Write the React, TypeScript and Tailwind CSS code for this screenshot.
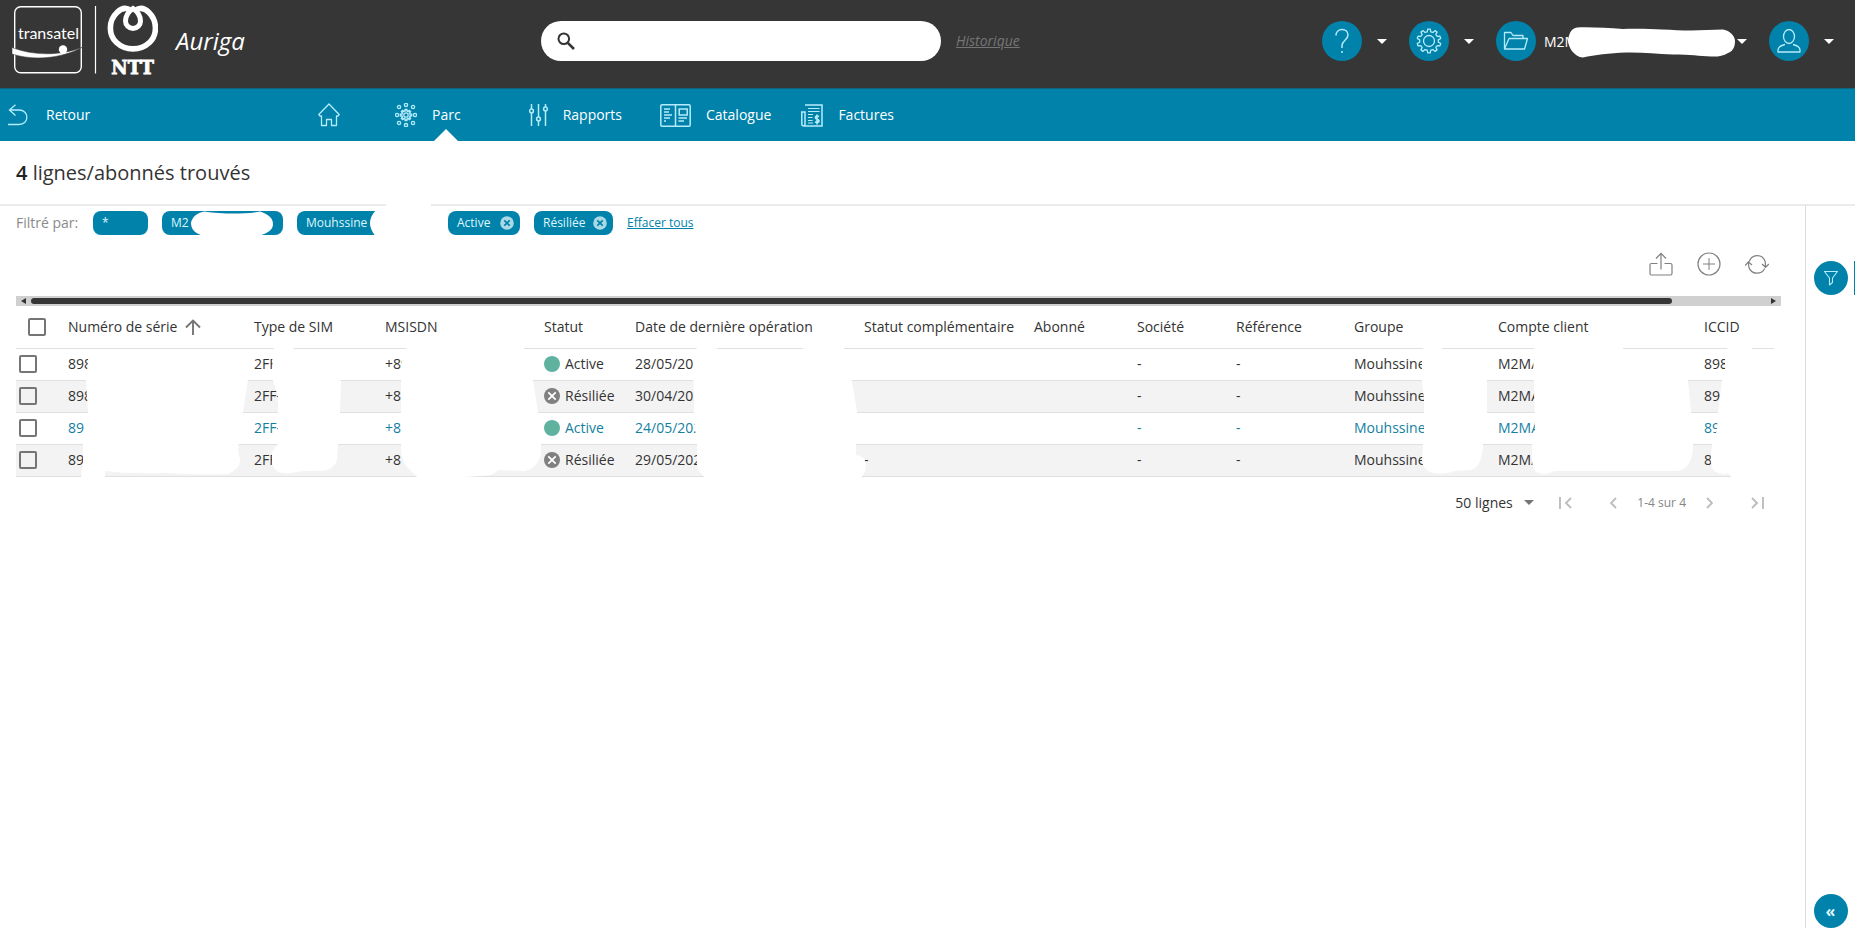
import React from "react";

const rows = [
  { serial: "898", sim: "2FF-", msisdn: "+89", active: true, date: "28/05/202", extra: "", group: "Mouhssine", account: "M2MA", iccid: "898", link: false },
  { serial: "898", sim: "2FF-", msisdn: "+8", active: false, date: "30/04/202", extra: "", group: "Mouhssine", account: "M2MA", iccid: "89", link: false },
  { serial: "89", sim: "2FF-", msisdn: "+8", active: true, date: "24/05/202", extra: "", group: "Mouhssine", account: "M2MA", iccid: "898", link: true },
  { serial: "89", sim: "2FF-", msisdn: "+8", active: false, date: "29/05/202", extra: "-", group: "Mouhssine", account: "M2MA", iccid: "89", link: false },
];

function gearPath(c: number, outer: number, inner: number, teeth: number) {
  const step = (Math.PI * 2) / teeth;
  const pts: string[] = [];
  for (let i = 0; i < teeth; i++) {
    const a = i * step - Math.PI / 2;
    const at = (r: number, t: number) => `${(c + r * Math.cos(t)).toFixed(2)} ${(c + r * Math.sin(t)).toFixed(2)}`;
    pts.push(at(inner, a - step * 0.3), at(outer, a - step * 0.17), at(outer, a + step * 0.17), at(inner, a + step * 0.3));
  }
  return `M${pts.join("L")}Z`;
}

function Caret({ className }: { className: string }) {
  return (
    <svg width="10" height="5" viewBox="0 0 10 5" className={className} aria-hidden="true">
      <path d="M0 0h10L5 5z" fill="currentColor" />
    </svg>
  );
}

function RoundButton({ label, children }: { label: string; children: React.ReactNode }) {
  return (
    <button aria-label={label} className="flex size-10 shrink-0 items-center justify-center rounded-full bg-[#0082aa] text-[#b5ecfb]">
      {children}
    </button>
  );
}

function Logo() {
  return (
    <svg width="148" height="76" viewBox="10 4 148 76" aria-label="Transatel NTT" className="shrink-0">
      <rect x="14.7" y="7.7" width="66.6" height="66" rx="6" fill="none" stroke="#fff" strokeWidth="1.4" />
      <path d="M12 48.500v6.500C33 61.500 60 60.500 84 47.500C62 57 34 57 12 48.500Z" fill="#fff" stroke="#363636" strokeWidth=".5" />
      <circle cx="63" cy="50.500" r="4.200" fill="#fff" />
      <text x="48.500" y="39.500" textAnchor="middle" fontFamily="Lato, 'Liberation Sans', sans-serif" fontSize="16" fill="#fff">transatel</text>
      <path d="M95.500 7v67.500" stroke="#fff" strokeWidth="1.200" />
      <g fill="none" stroke="#fff" strokeWidth="5.600">
        <path d="M133 9.500C128 13 125.500 17.500 125.500 22A7.500 7.500 0 0 0 140.500 22C140.500 17.500 138 13 133 9.500Z" strokeWidth="5" />
        <path d="M131 11.500C126 8 121 9.500 117 13.500C108 22 108.500 36 116.500 43.500C125.500 52 140.500 52 149.500 43.500C157.500 36 157.500 22 149 13.500C145 9.500 140 8 135 11.500" />
      </g>
      <text x="132.500" y="74.500" textAnchor="middle" fontFamily="'DejaVu Serif', serif" fontWeight="bold" fontSize="18" fill="#fff" stroke="#fff" strokeWidth=".8">NTT</text>
    </svg>
  );
}

function Header() {
  return (
    <header className="flex h-[88px] items-center bg-[#363636] pb-[6px] text-white">
      <div className="flex w-[541px] shrink-0 items-center gap-[18px] pl-[10px]">
        <Logo />
        <span className="text-2xl italic">Auriga</span>
      </div>
      <div className="flex items-center gap-[15px]">
        <label className="flex h-10 w-[400px] items-center gap-2 rounded-full bg-white pl-4 text-[#333]">
          <svg width="18" height="18" viewBox="0 0 18 18" fill="none" stroke="currentColor" aria-label="Rechercher">
            <circle cx="6.800" cy="6.800" r="5.300" strokeWidth="2" />
            <path d="M10.800 10.800L17 17" strokeWidth="2.600" />
          </svg>
          <input type="search" aria-label="Rechercher" className="min-w-0 flex-1 bg-transparent pr-4 text-sm outline-none" />
        </label>
        <a href="#historique" className="text-sm italic text-[#757575] underline">Historique</a>
      </div>
      <div className="ml-auto flex items-center gap-[22px] pr-[21px]">
        <div className="flex items-center gap-[15px]">
          <RoundButton label="Aide">
            <svg width="16" height="26" viewBox="0 0 16 26" fill="none" stroke="currentColor" strokeWidth="1.500">
              <path d="M2 7.500C2 -.5 14 -.5 14 7C14 12 8 12.500 8 17.500V20" />
              <path d="M8 23v2" />
            </svg>
          </RoundButton>
          <Caret className="" />
        </div>
        <div className="flex items-center gap-[15px]">
          <RoundButton label="Paramètres">
            <svg width="26" height="26" viewBox="0 0 26 26" fill="none" stroke="currentColor" strokeWidth="1.300">
              <path d={gearPath(13, 12, 9.4, 10)} strokeLinejoin="round" />
              <circle cx="13" cy="13" r="5.500" />
            </svg>
          </RoundButton>
          <Caret className="" />
        </div>
        <div className="flex items-center">
          <RoundButton label="Compte">
            <svg width="26" height="20" viewBox="0 0 26 20" fill="none" stroke="currentColor" strokeWidth="1.300" strokeLinejoin="round">
              <path d="M1.500 18V1.500H8L10 4.500H20V7.500M1.500 18L6 7.500H24.500L21.500 18Z" />
            </svg>
          </RoundButton>
          <div className="relative ml-2 w-[193px]">
            <span className="text-sm">M2M</span>
            <svg width="172" height="34" viewBox="1564 26 172 34" className="absolute left-[21px] top-[-4px]" aria-hidden="true">
              <path d="M1576 28.500C1590 28 1606 29 1622 30C1636 29.500 1650 30 1661 30.500C1672 31 1680 31.500 1690 31.500L1722 30.500C1730 32 1734 38 1734 42C1734 48 1732 52 1727 54C1722 57 1716 58 1710 57.500C1698 57 1690 55.500 1672 55.500C1655 55 1640 53 1625 53.500C1608 54 1594 56 1582 58.500C1573 58 1567 48 1567 41C1568 34 1571 29 1576 28.500Z" fill="#fff" />
            </svg>
          </div>
          <Caret className="" />
        </div>
        <div className="flex items-center gap-[15px]">
          <RoundButton label="Utilisateur">
            <svg width="24" height="24" viewBox="0 0 24 24" fill="none" stroke="currentColor" strokeWidth="1.300" strokeLinejoin="round">
              <ellipse cx="12" cy="7.500" rx="5.500" ry="7" />
              <path d="M8 15.500C4 16.500 1 18 1 21V23H23V21C23 18 20 16.500 16 15.500" />
            </svg>
          </RoundButton>
          <Caret className="" />
        </div>
      </div>
    </header>
  );
}

function ParcIcon() {
  const ring = [[11, 1.9], [18, 4], [20, 12], [18, 20], [11, 22.1], [4, 20], [2, 12], [4, 4]];
  return (
    <svg width="22" height="24" viewBox="0 0 22 24" fill="none" stroke="currentColor">
      {ring.map(([x, y], i) => (
        <circle key={i} cx={x} cy={y} r="1.600" strokeWidth="1.300" />
      ))}
      <path d={gearPath(12, 5.6, 4.2, 8)} transform="translate(-1 0)" strokeWidth="1.600" />
      <circle cx="11" cy="12" r="2.200" strokeWidth="1.300" />
    </svg>
  );
}

function Nav() {
  const link = "flex items-center gap-[15px]";
  return (
    <nav className="flex h-[53px] items-center border-t border-[#0f6580] bg-[#0082aa] text-sm text-white">
      <a href="#retour" className="flex w-[318px] shrink-0 items-center gap-[18px] pl-2">
        <svg width="20" height="22" viewBox="0 0 20 22" fill="none" stroke="#b5ecfb" strokeWidth="1.300">
          <path d="M0 20.500H11C21.500 20.500 21.500 6 11 6H2M7.500 .7L1.500 6L7.500 11.500" />
        </svg>
        Retour
      </a>
      <a href="#accueil" aria-label="Accueil" className="mr-[55px]">
        <svg width="22" height="24" viewBox="0 0 22 24" fill="none" stroke="#b5ecfb" strokeWidth="1.300" strokeLinejoin="round">
          <path d="M.8 11.500L11 1L21.200 11.500L20 13H18.500V22.500H13.500V16.500H8.500V22.500H3.500V13H2Z" />
        </svg>
      </a>
      <a href="#parc" className={`${link} relative mr-[68px] h-full text-white`}>
        <span className="text-[#b5ecfb]"><ParcIcon /></span>
        Parc
        <svg width="24" height="12" viewBox="0 0 24 12" className="absolute bottom-0 right-[3px]" aria-hidden="true">
          <path d="M0 12L12 0L24 12Z" fill="#fff" />
        </svg>
      </a>
      <a href="#rapports" className={`${link} mr-[38px]`}>
        <svg width="19" height="24" viewBox="0 0 19 24" fill="none" stroke="#b5ecfb" strokeWidth="1.500">
          <path d="M2.500 1V6M2.500 10V23M9.500 1V14M9.500 18V23M16.500 1V4M16.500 8V23" />
          <circle cx="2.500" cy="8" r="1.900" />
          <circle cx="9.500" cy="16" r="1.900" />
          <circle cx="16.500" cy="6" r="1.900" />
        </svg>
        Rapports
      </a>
      <a href="#catalogue" className={`${link} mr-[30px]`}>
        <svg width="31" height="23" viewBox="0 0 31 23" fill="none" stroke="#b5ecfb" strokeWidth="1.500">
          <rect x=".8" y=".8" width="29.400" height="21.400" rx="1.200" />
          <path d="M15.500 1V22M4 5H10M4 8H9M4 11H12M4 14H10M4 17H6M18.500 14H27M18.500 17H24" />
          <rect x="19.200" y="5" width="8" height="6" />
        </svg>
        Catalogue
      </a>
      <a href="#factures" className={link}>
        <svg width="22" height="23" viewBox="0 0 22 23" fill="none" stroke="#b5ecfb" strokeWidth="1.500">
          <path d="M4 1H21V22H3C1.500 22 .8 21 .8 20V8H4V20C4 21 3.500 22 2.500 22" />
          <path d="M7 4.500H18.500M7 7.500H18.500M7 10.500H12M7 13.500H11.500M7 16.500H11.500M7 19H12" strokeWidth="1.200" />
          <path d="M18 12.500C15 11.200 13.500 13.500 15 14.500L17.500 16C19 17.500 17 19.200 14 18M16 10.500V20.500" strokeWidth="1.600" />
        </svg>
        Factures
      </a>
    </nav>
  );
}

function ChipClose({ label }: { label: string }) {
  return (
    <button aria-label={`Retirer ${label}`} className="ml-auto">
      <svg width="14" height="14" viewBox="0 0 14 14">
        <circle cx="7" cy="7" r="6.800" fill="#a9d8e6" />
        <path d="M4.300 4.300L9.700 9.700M9.700 4.300L4.300 9.700" stroke="#0082aa" strokeWidth="1.700" />
      </svg>
    </button>
  );
}

function Filters() {
  const chip = "flex h-6 shrink-0 items-center rounded-lg bg-[#0082aa] pl-[9px] pr-[6px] text-xs text-[#dff6fd]";
  return (
    <div className="relative flex items-center gap-[14px] pt-[5px]">
      <span className="w-[63px] text-sm text-[#8a8a8a]">Filtré par:</span>
      <span className={`${chip} w-[55px]`}>*</span>
      <span className={`${chip} w-[121px]`}>M2</span>
      <span className={`${chip} w-[137px]`}>Mouhssine</span>
      <span className={`${chip} w-[72px]`}>Active<ChipClose label="Active" /></span>
      <span className={`${chip} w-[79px]`}>Résiliée<ChipClose label="Résiliée" /></span>
      <a href="#effacer" className="text-xs text-[#0082aa] underline">Effacer tous</a>
      <svg width="420" height="38" viewBox="16 200 420 38" className="absolute left-0 top-[-5px]" aria-hidden="true">
        <path d="M204 210.500C214 212 224 212.500 233 212.500C243 212.500 252 212 260 210.500C268 213 273 217 273 223C273 229 268 232 260 234.500L205 235.500C196 233 191 229 191 222C192 216 197 212 204 210.500Z" fill="#fff" />
        <path d="M386 200H431V207H436V238H378C373 233 370 227 370 222C370 218 372 213 376 209L386 207Z" fill="#fff" />
      </svg>
    </div>
  );
}

function Toolbar() {
  return (
    <div className="flex items-center justify-end gap-[24px] pr-[12px] text-[#808080]">
      <button aria-label="Exporter">
        <svg width="24" height="24" viewBox="0 0 24 24" fill="none" stroke="currentColor" strokeWidth="1.200">
          <path d="M8.500 11.500H2.500Q1 11.500 1 13V21.500Q1 23 2.500 23H21.500Q23 23 23 21.500V13Q23 11.500 21.500 11.500H15.500M12 17.500V1.500M7 6.500L12 1.300L17 6.500" />
        </svg>
      </button>
      <button aria-label="Ajouter">
        <svg width="24" height="24" viewBox="0 0 24 24" fill="none" stroke="currentColor" strokeWidth="1.200">
          <circle cx="12" cy="12" r="11" />
          <path d="M12 6V18M6 12H18" strokeWidth="1" />
        </svg>
      </button>
      <button aria-label="Actualiser">
        <svg width="24" height="24" viewBox="0 0 24 24" fill="none" stroke="currentColor" strokeWidth="1.200">
          <path d="M4.300 9.500C6.500 2.500 17 1 20.200 9.500L20.600 15M23.800 12L20.600 15.300L17 12M19.700 16.500C17 22.500 6.500 23.500 3.800 15L3.400 10M.2 13.500L3.400 9.800L7 13" />
        </svg>
      </button>
    </div>
  );
}

function ScrollBar() {
  return (
    <div className="flex h-[10px] items-center bg-[#d0d0d0] px-[5px] text-[#333]">
      <svg width="5" height="6" viewBox="0 0 5 6"><path d="M5 0V6L0 3Z" fill="currentColor" /></svg>
      <div className="mx-[5px] flex-1">
        <div className="h-[6px] w-[94.6%] rounded-full bg-[#363636]" />
      </div>
      <svg width="5" height="6" viewBox="0 0 5 6"><path d="M0 0V6L5 3Z" fill="currentColor" /></svg>
    </div>
  );
}

const box = "block size-[18px] appearance-none rounded-[2px] border-2 border-[#757575] bg-transparent";

function StatusIcon({ active }: { active: boolean }) {
  return (
    <svg width="16" height="16" viewBox="0 0 16 16" className="shrink-0" aria-hidden="true">
      <circle cx="8" cy="8" r="8" fill={active ? "#5fb2a0" : "#808080"} />
      {!active && <path d="M4.300 4.300L11.700 11.700M11.700 4.300L4.300 11.700" stroke="#fff" strokeWidth="1.800" />}
    </svg>
  );
}

function Lines() {
  return (
    <div className="relative overflow-hidden">
      <table className="w-full table-fixed border-collapse whitespace-nowrap text-left text-sm text-[#333]">
        <colgroup>
          <col className="w-[52px]" /><col className="w-[186px]" /><col className="w-[131px]" /><col className="w-[159px]" />
          <col className="w-[91px]" /><col className="w-[229px]" /><col className="w-[170px]" /><col className="w-[103px]" />
          <col className="w-[99px]" /><col className="w-[118px]" /><col className="w-[144px]" /><col className="w-[206px]" /><col />
        </colgroup>
        <thead>
          <tr className="h-[42px] border-b border-[#e0e0e0] [&>th]:p-0 [&>th]:font-normal">
            <th><input type="checkbox" aria-label="Tout sélectionner" className={`${box} ml-3`} /></th>
            <th>
              <span className="flex items-center gap-2">
                Numéro de série
                <svg width="16" height="16" viewBox="0 0 16 16" fill="none" stroke="#757575" strokeWidth="1.900"><path d="M8 16V1.500M1 8.500L8 1.500L15 8.500" /></svg>
              </span>
            </th>
            <th>Type de SIM</th>
            <th>MSISDN</th>
            <th>Statut</th>
            <th>Date de dernière opération</th>
            <th>Statut complémentaire</th>
            <th>Abonné</th>
            <th>Société</th>
            <th>Référence</th>
            <th>Groupe</th>
            <th>Compte client</th>
            <th>ICCID</th>
          </tr>
        </thead>
        <tbody>
          {rows.map((r, i) => (
            <tr
              key={i}
              className={`h-8 border-b border-[#e0e0e0] even:bg-[#f3f3f3] [&>td]:p-0 ${r.link ? "text-[#147f9f]" : ""}`}
            >
              <td><input type="checkbox" aria-label={`Ligne ${i + 1}`} className={`${box} ml-[3px]`} /></td>
              <td>{r.serial}</td>
              <td>{r.sim}</td>
              <td>{r.msisdn}</td>
              <td>
                <span className="flex items-center gap-[5px]">
                  <StatusIcon active={r.active} />
                  {r.active ? "Active" : "Résiliée"}
                </span>
              </td>
              <td>{r.date}</td>
              <td>{r.extra}</td>
              <td></td>
              <td>-</td>
              <td>-</td>
              <td>{r.group}</td>
              <td>{r.account}</td>
              <td>{r.iccid}</td>
            </tr>
          ))}
        </tbody>
      </table>
      <svg width="1766" height="172" viewBox="16 306 1766 172" className="pointer-events-none absolute left-0 top-0" aria-hidden="true">
        <g fill="#fff">
          <path d="M89 350L86 381L88 412L83 445V465Q80 475 82 478H105V471Q130 474 165 473Q200 475 228 474Q241 468 240 460L238 450L243 412L248 380L250 350Z" />
          <path d="M277 346H290L341 381L340 412L338 445L337 460Q334 470 322 471Q305 470 290 473Q275 475 272 464V452L278 444V395L273 381L272 350Z" />
          <path d="M412 346H523L533 381L538 412L541 444V455Q537 468 525 471L498 470Q493 476 480 476L450 478H418L410 470Q401 462 401 450V372L403 350Z" />
          <path d="M702 346H717V350H803V346H843L852 381L857 412L856 444V455Q865 456 866 464Q866 474 860 478H706Q697 472 697 465V442L695 430L694 412L693 350Z" />
          <path d="M1425 346H1442V350H1487V412L1483 445Q1482 468 1470 470L1455 471Q1440 476 1430 472Q1422 468 1422 460L1424 430V400L1422 381V350Z" />
          <path d="M1536 346H1623V350H1686L1688 381L1691 412L1693 445Q1693 470 1676 471H1554Q1546 477 1536 472Q1532 466 1532 460V444L1535 430L1533 350Z" />
          <path d="M1731 346H1752V350H1774V346H1782V480H1734L1728 473Q1722 476 1714 471Q1710 465 1711 455L1712 444L1717 430L1718 412L1722 381L1725 370V350Z" />
        </g>
      </svg>
    </div>
  );
}

function Pagination() {
  return (
    <div className="flex h-[52px] items-center justify-end pr-[17px] text-[#bdbdbd]">
      <label className="relative mr-[25px] flex items-center text-[#333]">
        <select aria-label="Lignes par page" className="w-[79px] appearance-none bg-transparent text-sm outline-none">
          <option>50 lignes</option>
        </select>
        <Caret className="pointer-events-none absolute right-0 text-[#757575]" />
      </label>
      <button aria-label="Première page" className="mr-[38px]">
        <svg width="13" height="12" viewBox="0 0 13 12" fill="none" stroke="currentColor" strokeWidth="1.900"><path d="M1 0V12M12 1L7 6L12 11" /></svg>
      </button>
      <button aria-label="Page précédente" className="mr-5">
        <svg width="7" height="12" viewBox="0 0 7 12" fill="none" stroke="currentColor" strokeWidth="1.900"><path d="M6 1L1 6L6 11" /></svg>
      </button>
      <span className="mr-5 text-xs text-[#858585]">1-4 sur 4</span>
      <button aria-label="Page suivante" className="mr-[38px]">
        <svg width="7" height="12" viewBox="0 0 7 12" fill="none" stroke="currentColor" strokeWidth="1.900"><path d="M1 1L6 6L1 11" /></svg>
      </button>
      <button aria-label="Dernière page">
        <svg width="13" height="12" viewBox="0 0 13 12" fill="none" stroke="currentColor" strokeWidth="1.900"><path d="M1 1L6 6L1 11M12 0V12" /></svg>
      </button>
    </div>
  );
}

export default function App() {
  return (
    <div className="flex min-h-screen flex-col bg-white font-['Open_Sans',sans-serif]">
      <Header />
      <Nav />
      <div className="border-b-2 border-[#ebebeb] px-4 pb-[17px] pt-[18px]">
        <h1 className="text-xl text-[#333]"><b className="font-semibold text-[#222]">4</b> lignes/abonnés trouvés</h1>
      </div>
      <div className="flex flex-1">
        <main className="min-w-0 flex-1 pl-4 pr-6">
          <Filters />
          <div className="pb-5 pt-[17px]"><Toolbar /></div>
          <ScrollBar />
          <Lines />
          <Pagination />
        </main>
        <aside className="flex w-[50px] shrink-0 flex-col items-center justify-between border-l border-[#dcdcdc]">
          <div className="flex w-full items-center justify-between pl-2 pt-[55px]">
            <button aria-label="Filtrer" className="flex size-[34px] items-center justify-center rounded-full bg-[#0082aa]">
              <svg width="16" height="16" viewBox="0 0 16 16" fill="none" stroke="#b5ecfb" strokeWidth="1.100" strokeLinejoin="round">
                <path d="M1.500 1.500H14.500L9.500 8V12.500L6.500 15V8Z" />
              </svg>
            </button>
            <div className="h-[34px] w-px bg-[#0082aa]" />
          </div>
          <button aria-label="Déplier" className="flex size-[34px] items-center justify-center rounded-full bg-[#0082aa] text-base font-bold text-[#dff6fd]">
            «
          </button>
        </aside>
      </div>
    </div>
  );
}
